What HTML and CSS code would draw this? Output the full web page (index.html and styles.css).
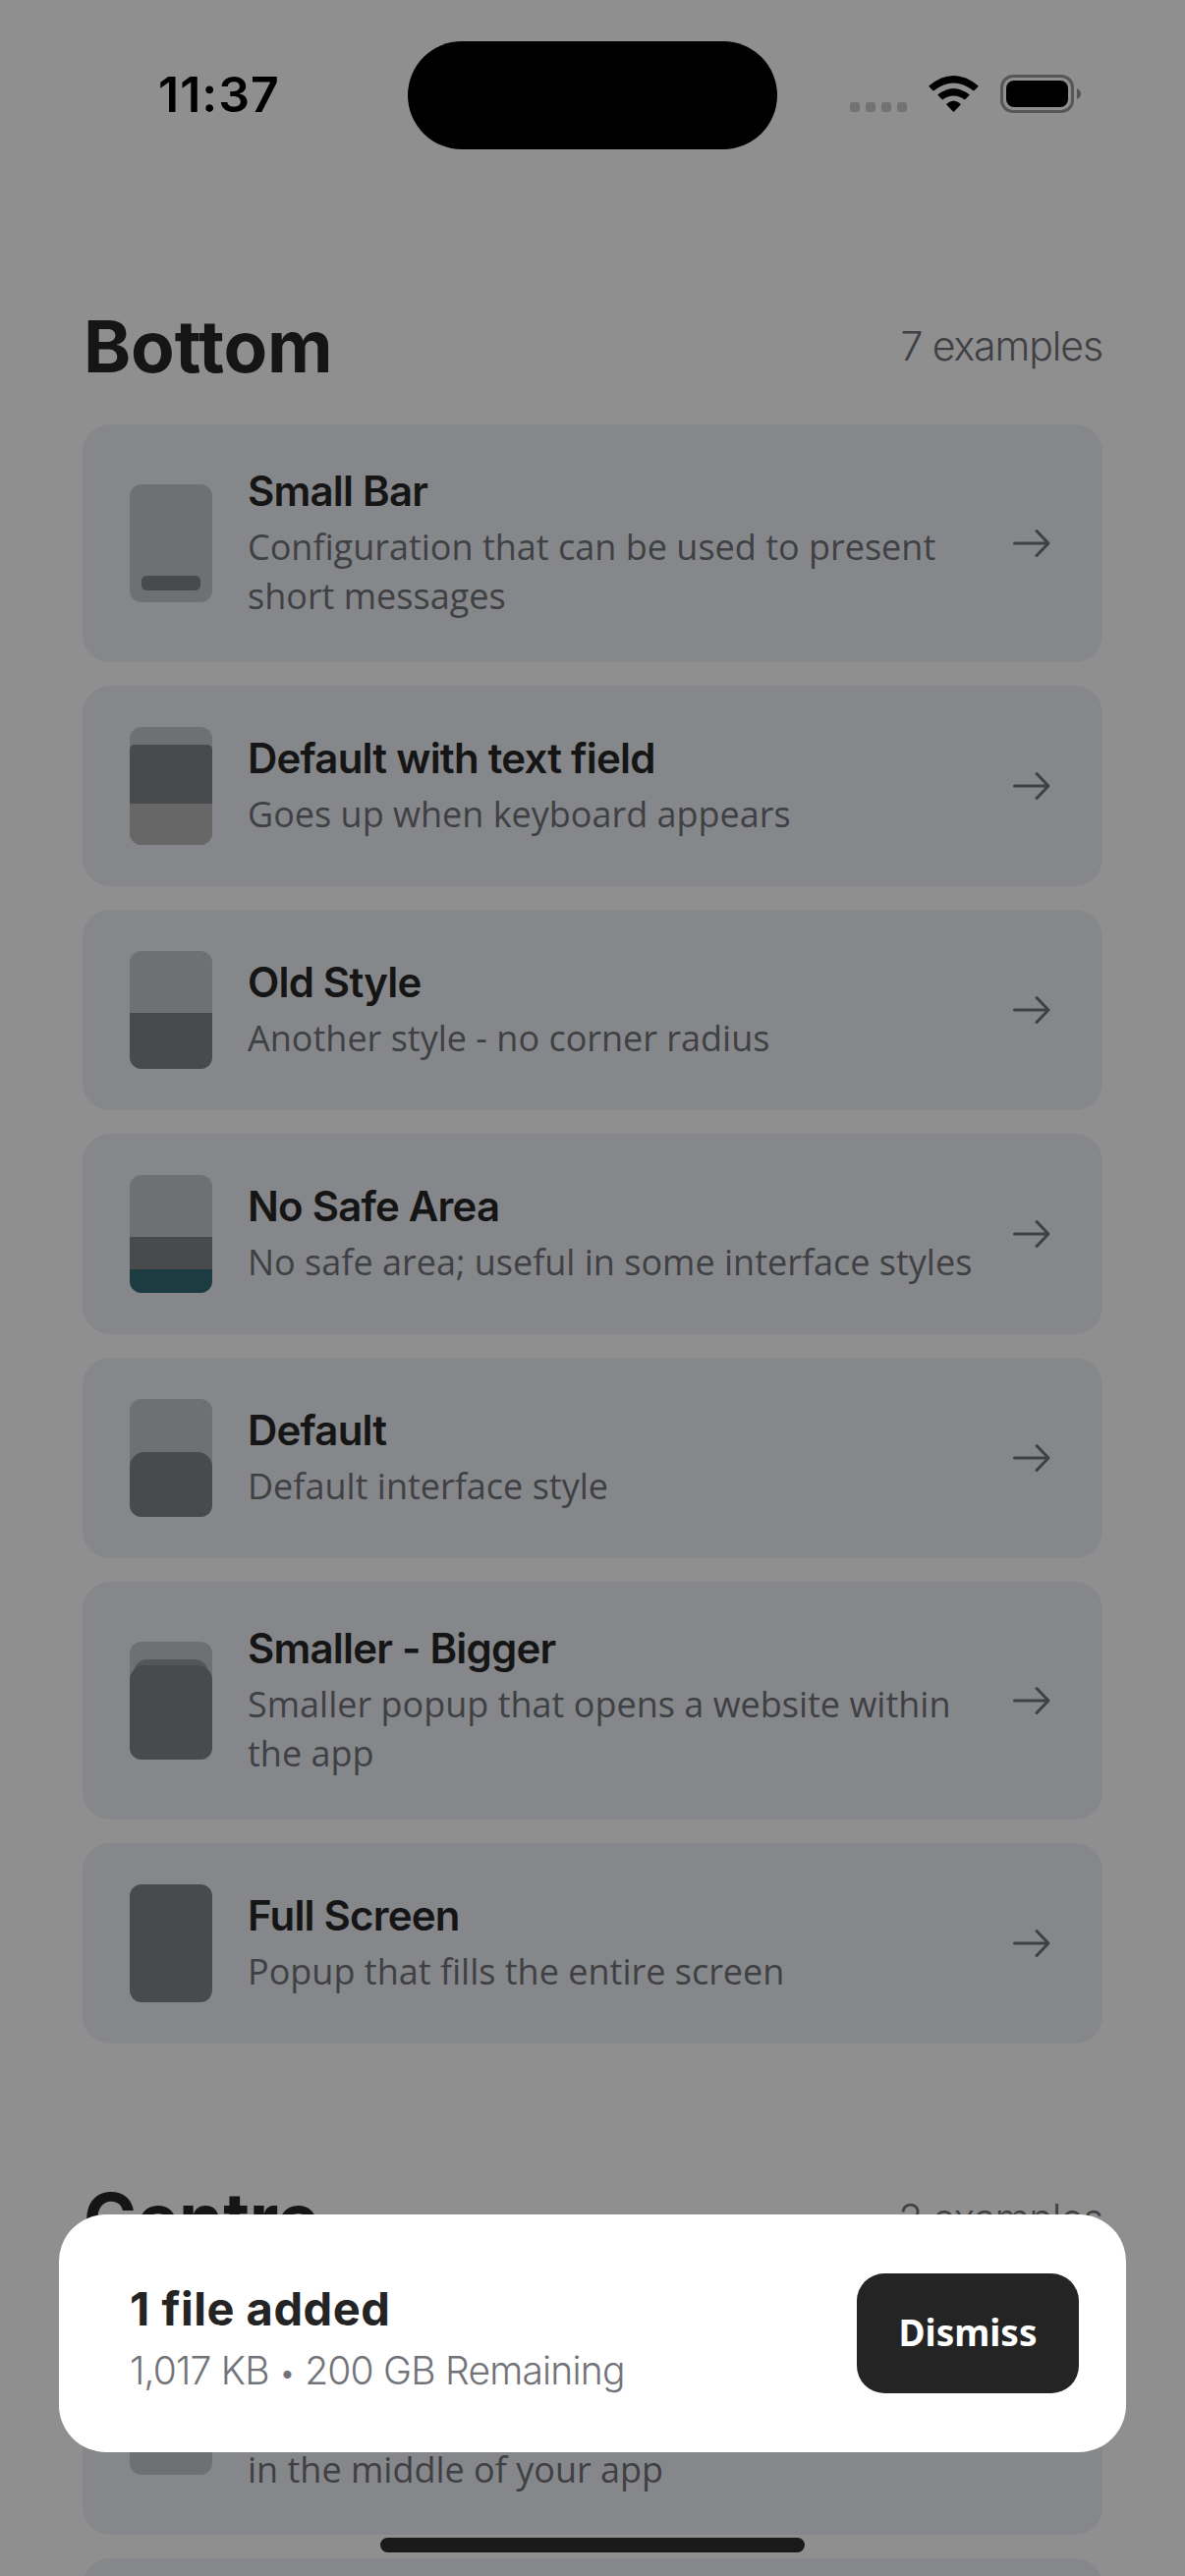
FILE: index.html
```
<!DOCTYPE html>
<html lang="en">
<head>
<meta charset="utf-8">
<title>Popups</title>
<link rel="stylesheet" href="styles.css">
</head>
<body>
<svg class="defs" aria-hidden="true">
  <symbol id="arrow" viewBox="0 0 40 30">
    <path d="M2.5 15H36M25 2.5L37 15L25 27.5" fill="none" stroke="currentColor" stroke-width="3" stroke-linecap="round" stroke-linejoin="round"/>
  </symbol>
</svg>
<div class="screen">
  <header class="status">
    <div class="clock">11:37</div>
    <div class="island"></div>
    <div class="indicators">
      <svg width="236" height="44" viewBox="0 0 236 44">
        <g fill="#727272">
          <rect x="1" y="30" width="10" height="10" rx="3"/>
          <rect x="17" y="30" width="10" height="10" rx="3"/>
          <rect x="33" y="30" width="10" height="10" rx="3"/>
          <rect x="49" y="30" width="10" height="10" rx="3"/>
        </g>
        <path d="M81.2 13.4Q106.500 -7.500 131.800 13.400Q131.800 14 126.900 18.600Q106.500 2.500 86.100 18.600Q81.200 14 81.200 13.400Z"/>
        <path d="M90.200 22.600Q106.500 9.500 122.800 22.600Q122 23.500 117.900 27.600Q106.500 19.500 95.100 27.600Q91 23.500 90.200 22.600Z"/>
        <path d="M99 32Q106.500 25 114 32Q113 33.500 106.500 40Q100 33.500 99 32Z"/>
        <rect x="155.500" y="3.500" width="72" height="36" rx="11.500" fill="none" stroke="#565656" stroke-width="3"/>
        <rect x="160" y="8" width="63" height="27" rx="8"/>
        <path d="M232 16Q236 17.500 236 21.500Q236 25.500 232 27Z" fill="#565656"/>
      </svg>
    </div>
  </header>

  <main class="content">
    <section class="group">
      <div class="group-head">
        <h2 class="group-title">Bottom</h2>
        <span class="count">7 examples</span>
      </div>
      <div class="cards">
        <article class="card tall">
          <div class="thumb"><i class="bar"></i></div>
          <div class="copy"><h3>Small Bar</h3><p>Configuration that can be used to present short messages</p></div>
          <svg class="arrow"><use href="#arrow"/></svg>
        </article>
        <article class="card">
          <div class="thumb"><i class="field"></i><i class="keys"></i></div>
          <div class="copy"><h3>Default with text field</h3><p>Goes up when keyboard appears</p></div>
          <svg class="arrow"><use href="#arrow"/></svg>
        </article>
        <article class="card">
          <div class="thumb"><i class="sheet-flat"></i></div>
          <div class="copy"><h3>Old Style</h3><p>Another style - no corner radius</p></div>
          <svg class="arrow"><use href="#arrow"/></svg>
        </article>
        <article class="card">
          <div class="thumb"><i class="sheet-short"></i><i class="safe"></i></div>
          <div class="copy"><h3>No Safe Area</h3><p>No safe area; useful in some interface styles</p></div>
          <svg class="arrow"><use href="#arrow"/></svg>
        </article>
        <article class="card">
          <div class="thumb"><i class="sheet"></i></div>
          <div class="copy"><h3>Default</h3><p>Default interface style</p></div>
          <svg class="arrow"><use href="#arrow"/></svg>
        </article>
        <article class="card tall">
          <div class="thumb"><i class="stack-back"></i><i class="stack-front"></i></div>
          <div class="copy"><h3>Smaller - Bigger</h3><p>Smaller popup that opens a website within the app</p></div>
          <svg class="arrow"><use href="#arrow"/></svg>
        </article>
        <article class="card">
          <div class="thumb full"></div>
          <div class="copy"><h3>Full Screen</h3><p>Popup that fills the entire screen</p></div>
          <svg class="arrow"><use href="#arrow"/></svg>
        </article>
      </div>
    </section>

    <section class="group">
      <div class="group-head">
        <h2 class="group-title">Centre</h2>
        <span class="count">2 examples</span>
      </div>
      <div class="cards">
        <article class="card tall">
          <div class="thumb"></div>
          <div class="copy last-line"><p>in the middle of your app</p></div>
        </article>
        <article class="card"></article>
      </div>
    </section>
  </main>

  <aside class="popup">
    <div class="popup-copy">
      <strong class="popup-title">1 file added</strong>
      <span class="popup-sub">1,017 KB <span class="dot">•</span> 200 GB Remaining</span>
    </div>
    <button class="dismiss">Dismiss</button>
  </aside>
  <div class="home"></div>
</div>
</body>
</html>
```

FILE: styles.css
```
* { box-sizing: border-box; }
body { margin: 0; background: #8f8f8f; }
h2, h3, p { margin: 0; }
.defs { position: absolute; width: 0; height: 0; }

.screen {
  position: relative;
  width: 1206px;
  height: 2622px;
  overflow: hidden;
  background: #8f8f8f;
  font-family: Inter, "Liberation Sans", sans-serif;
  color: #151515;
}

/* Status bar */
.status {
  display: grid;
  grid-template-columns: 415px 376px 1fr;
  height: 194px;
  padding-top: 42px;
}
.clock {
  padding: 24px 0 0 161px;
  font-size: 50px;
  font-weight: 600;
  line-height: 60px;
  letter-spacing: 1px;
  color: #000;
}
.island { height: 110px; border-radius: 55px; background: #000; }
.indicators { padding: 32px 0 0 73px; }
.indicators svg { display: block; }

/* Sections */
.content { padding: 0 84px; }
.group-head {
  display: flex;
  align-items: flex-start;
  justify-content: space-between;
  height: 238px;
  padding-top: 114px;
}
.group + .group .group-head { height: 258px; padding-top: 134px; }
.group-title { padding-left: 1px; font-size: 73px; font-weight: 700; line-height: 90px; letter-spacing: -0.2px; }
.count { font-size: 41px; font-weight: 300; line-height: 88px; letter-spacing: -1.1px; color: #3f4043; }
.cards { display: flex; flex-direction: column; gap: 24px; }

.card {
  display: flex;
  align-items: center;
  height: 204px;
  padding: 0 48px;
  border-radius: 28px;
  background: #86878a;
}
.card.tall { height: 242px; }
.copy { width: 750px; margin-left: 36px; }
.copy h3 {
  margin-bottom: 6px;
  font-size: 42px;
  font-weight: 600;
  line-height: 52px;
  letter-spacing: -0.8px;
}
.copy p {
  font-family: "Open Sans", "Noto Sans", sans-serif;
  font-size: 36px;
  line-height: 49.67px;
  color: #3f4043;
}
.last-line { padding-top: 109px; }
.arrow { flex: none; width: 40px; height: 30px; margin-left: auto; margin-right: 4px; color: #3f4043; }

/* Card previews */
.thumb {
  display: flex;
  flex-direction: column;
  justify-content: flex-end;
  flex: none;
  width: 84px;
  height: 120px;
  border-radius: 12px;
  background: #6f7073;
  overflow: hidden;
}
.thumb i { display: block; flex: none; background: #494a4b; }
.thumb.full { background: #494a4b; }
.thumb .bar { height: 15px; margin: 0 12px 12px; border-radius: 5px; }
.thumb .field { height: 60px; border-radius: 5px 5px 0 0; }
.thumb .keys { height: 42px; background: #676767; }
.thumb .sheet-flat { height: 57px; }
.thumb .sheet-short { height: 33px; }
.thumb .safe { height: 24px; background: #1d3c42; }
.thumb .sheet { height: 66px; border-radius: 15px 15px 0 0; }
.thumb .stack-back { height: 24px; margin: 0 4px -18px; border-radius: 14px 14px 0 0; background: #555657; }
.thumb .stack-front { height: 96px; border-radius: 15px 15px 0 0; }

/* Popup laid over the list */
.popup {
  position: absolute;
  left: 60px;
  right: 60px;
  bottom: 126px;
  display: flex;
  align-items: center;
  justify-content: space-between;
  height: 242px;
  padding: 0 48px 0 72px;
  border-radius: 48px;
  background: #fff;
}
.popup-copy { display: flex; flex-direction: column; padding-top: 8px; }
.popup-title { font-size: 47px; font-weight: 700; line-height: 60px; letter-spacing: 0.5px; color: #242424; }
.popup-sub { margin-top: 7px; font-size: 39px; font-weight: 300; line-height: 52px; letter-spacing: -0.8px; color: #717379; }
.dot { font-size: 30px; line-height: 1; vertical-align: 1px; }
.dismiss {
  width: 226px;
  height: 122px;
  padding: 0 0 3px;
  border: 0;
  border-radius: 28px;
  background: #242424;
  color: #fff;
  font-family: "Noto Sans", "Open Sans", sans-serif;
  font-size: 37px;
  font-weight: 700;
}
.home {
  position: absolute;
  left: 387px;
  bottom: 24px;
  width: 432px;
  height: 15px;
  border-radius: 8px;
  background: #1a1a1a;
}
```
